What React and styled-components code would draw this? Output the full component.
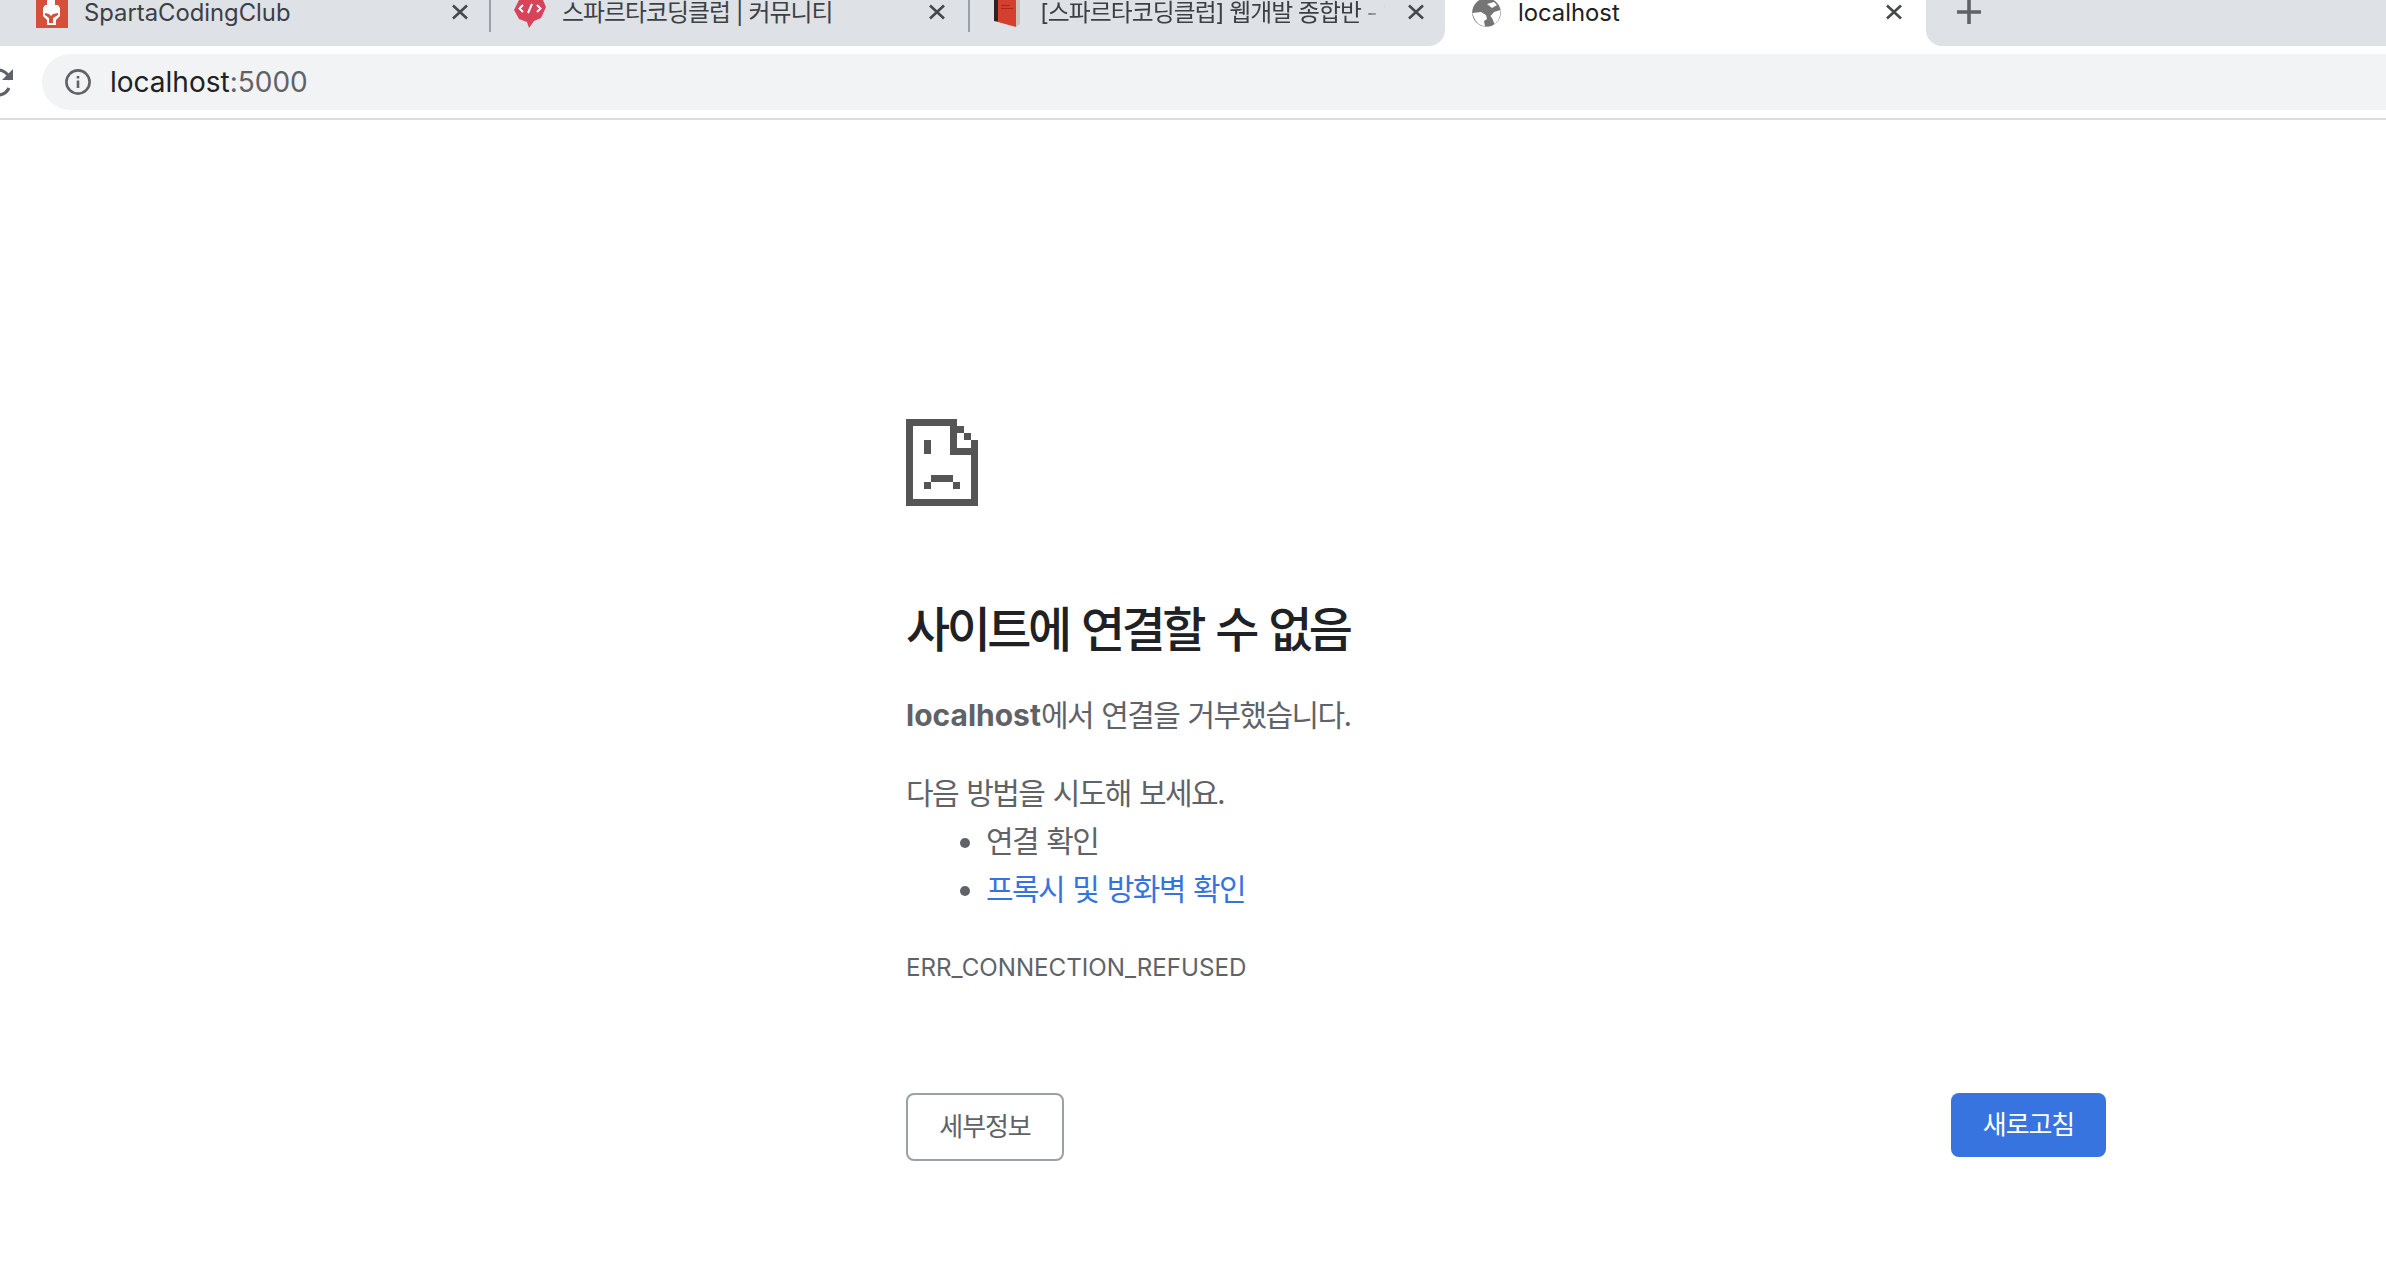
import React from 'react';
import styled, { createGlobalStyle } from 'styled-components';

const GlobalStyle = createGlobalStyle`
  html, body {
    margin: 0;
    padding: 0;
    background: #fff;
    font-family: Inter, "Noto Sans CJK KR", sans-serif;
  }
`;

const Page = styled.div`
  width: 2386px;
  height: 1270px;
  overflow: hidden;
  display: flex;
  flex-direction: column;
`;

// Tab strip
const TabStrip = styled.div`
  display: flex;
  height: 46px;
  flex: none;
  background: #fff;
`;

const InactiveTabs = styled.div`
  display: flex;
  width: 1445px;
  background: #dee1e6;
  border-bottom-right-radius: 16px;
`;

const Tab = styled.div`
  display: flex;
  align-items: flex-start;
  box-sizing: border-box;
  width: ${props => props.$width}px;
  padding-left: ${props => props.$left}px;
  padding-right: ${props => props.$right}px;
  gap: ${props => props.$gap}px;
`;

const TabDivider = styled.div`
  flex: none;
  width: 2px;
  height: 32px;
  background: #9aa0a6;
`;

const Favicon = styled.svg`
  flex: none;
  display: block;
  margin-top: ${props => props.$top || 0}px;
`;

const TabTitle = styled.span`
  flex: 1;
  min-width: 0;
  height: 25px;
  padding-top: 1px;
  line-height: 24px;
  font-size: 23.8px;
  letter-spacing: ${props => (props.$korean ? '-0.9px' : '0')};
  color: ${props => (props.$active ? '#202124' : '#3c4043')};
  white-space: nowrap;
  overflow: hidden;
  ${props => props.$fade && `
    -webkit-mask-image: linear-gradient(90deg, #000 92%, transparent 100%);
    mask-image: linear-gradient(90deg, #000 92%, transparent 100%);
  `}
`;

const CloseIcon = styled.svg`
  flex: none;
  display: block;
  margin-top: 4px;
`;

const NewTabArea = styled.div`
  flex: 1;
  padding-left: 31px;
  background: #dee1e6;
  border-bottom-left-radius: 16px;
`;

const PlusIcon = styled.svg`
  display: block;
`;

const ActiveTab = styled(Tab)`
  background: #fff;
`;

// Toolbar
const Toolbar = styled.div`
  display: flex;
  align-items: center;
  flex: none;
  height: 72px;
  box-sizing: border-box;
  padding: 8px 0;
`;

const ReloadIcon = styled.svg`
  flex: none;
  display: block;
  margin-left: -19px;
  margin-right: 29px;
`;

const Omnibox = styled.div`
  flex: 1;
  display: flex;
  align-items: center;
  gap: 19px;
  height: 56px;
  padding-left: 23px;
  background: #f1f3f4;
  border-radius: 28px 0 0 28px;
`;

const InfoIcon = styled.svg`
  flex: none;
  display: block;
`;

const Url = styled.span`
  font-size: 28px;
  color: #202124;
`;

const UrlPort = styled.span`
  color: #5f6368;
`;

const ToolbarLine = styled.div`
  flex: none;
  height: 2px;
  background: #dadce0;
`;

// Error page
const Main = styled.main`
  width: 1200px;
  padding: 299px 0 0 906px;
  color: #5f6368;
  font-size: 30px;
  line-height: 48px;
`;

const ErrorIcon = styled.svg`
  display: block;
  shape-rendering: crispEdges;
`;

const Title = styled.h1`
  margin: 94px 0 0;
  font-size: 48px;
  line-height: 60px;
  font-weight: 500;
  letter-spacing: -3.5px;
  word-spacing: 3px;
  color: #202124;
`;

const Summary = styled.p`
  margin: 31px 0 0;
  letter-spacing: -1.6px;
  word-spacing: 1.5px;
  strong {
    font-weight: 700;
    letter-spacing: 0;
  }
`;

const Suggestions = styled.p`
  margin: 30px 0 0;
  letter-spacing: -1.6px;
  word-spacing: 1.5px;
`;

const SuggestionList = styled.ul`
  margin: 0;
  padding-left: 80px;
  letter-spacing: -1.6px;
  word-spacing: 1.5px;
`;

const Suggestion = styled.li`
  &::marker {
    color: #5f6368;
  }
`;

const HelpLink = styled.a`
  color: #3574de;
  text-decoration: none;
`;

const ErrorCode = styled.div`
  margin-top: 40px;
  font-size: 24.15px;
  line-height: 30px;
`;

const Buttons = styled.div`
  display: flex;
  justify-content: space-between;
  align-items: flex-start;
  margin-top: 110px;
`;

const Button = styled.button`
  box-sizing: border-box;
  width: ${props => props.$width}px;
  height: ${props => props.$height}px;
  padding: 0 0 5px;
  font-family: inherit;
  font-size: 26px;
  letter-spacing: -1.1px;
  border-radius: 8px;
  border: ${props => (props.$primary ? 'none' : '2px solid #9aa0a6')};
  background: ${props => (props.$primary ? '#3874df' : '#fff')};
  color: ${props => (props.$primary ? '#fff' : '#5f6368')};
`;

const X = () => (
  <CloseIcon width="20" height="16" viewBox="0 0 20 16">
    <path d="M3 1.5 L17 14.5 M17 1.5 L3 14.5" stroke="#45484c" strokeWidth="2.6" fill="none" />
  </CloseIcon>
);

const SpartaIcon = () => (
  <Favicon width="32" height="28" viewBox="0 0 32 28">
    <rect width="32" height="28" fill="#d64f3a" />
    <path d="M11 0h8v5h3l2 3v8l-4 4v5h-9v-5l-4-4V8l2-3h2z" fill="#fff" />
    <path d="M9 13l4 1 2 2 2-2 5-1v2l-5 3v5h-4v-5l-4-3z" fill="#d64f3a" />
  </Favicon>
);

const CommunityIcon = () => (
  <Favicon width="32" height="28" viewBox="0 0 32 28">
    <path d="M5 0h24l3 7-5 11-7 3-5 7-2-6-8-3-5-9z" fill="#d9435a" />
    <path d="M9 5L5.500 8.500 9 12M23 5l3.500 3.500L23 12M18 4l-4 9" stroke="#fff" strokeWidth="2" fill="none" />
  </Favicon>
);

const BookIcon = () => (
  <Favicon width="26" height="28" viewBox="0 0 26 28">
    <path d="M0 0h5v22l-5-1z" fill="#2b2324" />
    <path d="M4 0h18v27L4 22z" fill="#d43f2e" />
    <path d="M22 0h4v24l-4 3z" fill="#c9c4c0" />
    <path d="M7 5h9v1H7zM7 8h12v1H7z" fill="#a52b20" />
  </Favicon>
);

const GlobeIcon = () => (
  <Favicon width="29" height="29" viewBox="0 0 29 29" $top={-2}>
    <circle cx="14.500" cy="14.500" r="14.300" fill="#757575" />
    <path d="M.5 15l8.500-1 5 3 1 4-3 2 1 5.500C6 27 2 22 .5 15zM28.500 12l-6.500 2-3.500 4 2 3 2 5c3-2 6-6 6-14zM15 6l7-2 3 3-5 3z" fill="#fff" />
  </Favicon>
);

const App = () => (
  <>
    <GlobalStyle />
    <Page>
      <TabStrip>
        <InactiveTabs>
          <Tab $width={489} $left={36} $right={19} $gap={16}>
            <SpartaIcon />
            <TabTitle>SpartaCodingClub</TabTitle>
            <X />
          </Tab>
          <TabDivider />
          <Tab $width={477} $left={23} $right={21} $gap={16}>
            <CommunityIcon />
            <TabTitle $korean>스파르타코딩클럽 | 커뮤니티</TabTitle>
            <X />
          </Tab>
          <TabDivider />
          <Tab $width={475} $left={24} $right={19} $gap={20}>
            <BookIcon />
            <TabTitle $korean $fade>[스파르타코딩클럽] 웹개발 종합반 - 1주차</TabTitle>
            <X />
          </Tab>
        </InactiveTabs>
        <ActiveTab $width={481} $left={27} $right={22} $gap={17}>
          <GlobeIcon />
          <TabTitle $active>localhost</TabTitle>
          <X />
        </ActiveTab>
        <NewTabArea>
          <PlusIcon width="24" height="24" viewBox="0 0 24 24">
            <path d="M12 0v24M0 12h24" stroke="#5f6368" strokeWidth="3.6" fill="none" />
          </PlusIcon>
        </NewTabArea>
      </TabStrip>

      <Toolbar>
        <ReloadIcon width="32" height="32" viewBox="0 0 32 32">
          <path d="M29 14a12.500 12.500 0 1 0-1 8" stroke="#5f6368" strokeWidth="3.2" fill="none" />
          <path d="M32 3v11H21z" fill="#5f6368" />
        </ReloadIcon>
        <Omnibox>
          <InfoIcon width="26" height="26" viewBox="0 0 26 26">
            <circle cx="13" cy="13" r="11.600" stroke="#5f6368" strokeWidth="2.600" fill="none" />
            <path d="M13 11.500v7.500M13 7v2.600" stroke="#5f6368" strokeWidth="2.600" fill="none" />
          </InfoIcon>
          <Url>
            localhost<UrlPort>:5000</UrlPort>
          </Url>
        </Omnibox>
      </Toolbar>
      <ToolbarLine />

      <Main>
        <ErrorIcon width="72" height="87" viewBox="0 0 215 261">
          <g fill="#555">
            <rect x="0" y="0" width="152" height="21" />
            <rect x="0" y="0" width="21" height="261" />
            <rect x="0" y="240" width="215" height="21" />
            <rect x="194" y="63" width="21" height="198" />
            <rect x="130" y="21" width="22" height="87" />
            <rect x="130" y="86" width="85" height="22" />
            <rect x="152" y="21" width="22" height="22" />
            <rect x="174" y="43" width="20" height="20" />
            <rect x="54" y="63" width="21" height="43" />
            <rect x="75" y="168" width="65" height="22" />
            <rect x="54" y="190" width="21" height="21" />
            <rect x="140" y="190" width="22" height="21" />
          </g>
        </ErrorIcon>
        <Title>사이트에 연결할 수 없음</Title>
        <Summary>
          <strong>localhost</strong>에서 연결을 거부했습니다.
        </Summary>
        <Suggestions>다음 방법을 시도해 보세요.</Suggestions>
        <SuggestionList>
          <Suggestion>연결 확인</Suggestion>
          <Suggestion>
            <HelpLink href="#">프록시 및 방화벽 확인</HelpLink>
          </Suggestion>
        </SuggestionList>
        <ErrorCode>ERR_CONNECTION_REFUSED</ErrorCode>
        <Buttons>
          <Button $width={158} $height={68}>세부정보</Button>
          <Button $primary $width={155} $height={64}>새로고침</Button>
        </Buttons>
      </Main>
    </Page>
  </>
);

export default App;
